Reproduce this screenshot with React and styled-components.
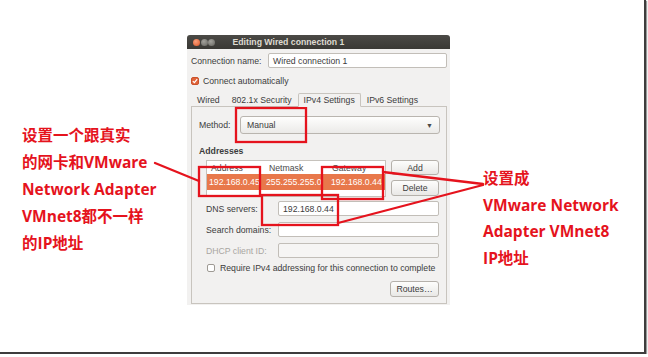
import React from 'react';
import styled, { createGlobalStyle } from 'styled-components';

const RED = '#e5131d';

const GlobalStyle = createGlobalStyle`
  html, body {
    margin: 0;
    padding: 0;
    background: #fff;
  }
  body {
    font-family: "Liberation Sans", Arial, sans-serif;
  }
`;

const Frame = styled.div`
  position: relative;
  width: 644px;
  height: 352px;
  background: #fff;
  border-right: 2px solid #3d3d3d;
  border-bottom: 2px solid #3d3d3d;
  box-shadow: 1px 1px 1px #9a9a9a;
  display: flex;
  align-items: flex-start;
`;

const Note = styled.div`
  color: ${RED};
  font-family: "Open Sans", "Noto Sans CJK SC", sans-serif;
  font-weight: 700;
  font-size: 15.5px;
  white-space: nowrap;
`;

const LeftNote = styled(Note)`
  width: 165px;
  padding: 122px 0 0 22px;
  line-height: 27px;
`;

const RightNote = styled(Note)`
  margin-left: 33px;
  padding-top: 165px;
  line-height: 26.5px;
`;

const Dialog = styled.div`
  margin-top: 35px;
  width: 263px;
  font-size: 8.7px;
  color: #3c3c3c;
`;

const TitleBar = styled.div`
  height: 14px;
  background: linear-gradient(#4b4a46, #3a3935);
  border-radius: 3px 3px 0 0;
  display: flex;
  align-items: center;
  padding-left: 6px;
`;

const WinBtn = styled.span`
  width: 7px;
  height: 7px;
  border-radius: 50%;
  margin-right: 0.5px;
  background: ${p =>
    p.$close
      ? 'radial-gradient(circle at 40% 35%, #f8a07c, #df5527)'
      : 'radial-gradient(circle at 40% 35%, #a3a29c, #64635e)'};
`;

const Title = styled.span`
  margin-left: 17px;
  color: #dfdbd2;
  font-weight: 700;
  font-size: 8.7px;
`;

const Body = styled.div`
  background: #f2f1f0;
  padding: 4px 3px 1px 4px;
  display: flex;
  flex-direction: column;
`;

const Row = styled.div`
  display: flex;
  align-items: center;
  height: ${p => p.$h || 15}px;
`;

const Label = styled.span`
  width: ${p => p.$w}px;
  flex: none;
  color: ${p => (p.$muted ? '#a9a6a1' : '#3c3c3c')};
`;

const TextInput = styled.div`
  flex: 1;
  height: 15px;
  box-sizing: border-box;
  border: 1px solid #c2beb8;
  border-radius: 2px;
  background: ${p => (p.$disabled ? '#f6f5f4' : '#fff')};
  padding-left: ${p => p.$pad || 3}px;
  display: flex;
  align-items: center;
  color: #3c3c3c;
`;

const CheckRow = styled.div`
  display: flex;
  align-items: center;
  gap: ${p => p.$gap}px;
  height: ${p => p.$h}px;
  margin-top: ${p => p.$mt}px;
  padding-left: ${p => p.$pl || 0}px;
`;

const Box = styled.span`
  width: 8px;
  height: 8px;
  box-sizing: border-box;
  border-radius: 2px;
  flex: none;
  display: flex;
  align-items: center;
  justify-content: center;
  background: ${p => (p.$checked ? '#e1643a' : '#fff')};
  border: 1px solid ${p => (p.$checked ? '#c9522b' : '#9e9a94')};
`;

const Tabs = styled.div`
  display: flex;
  align-items: flex-end;
  height: 14px;
  margin-top: 6px;
  position: relative;
  z-index: 1;
`;

const Tab = styled.span`
  padding: 0 5px;
  height: ${p => (p.$active ? 14 : 13)}px;
  line-height: 13px;
  box-sizing: border-box;
  border: 1px solid ${p => (p.$active ? '#c8c4be' : 'transparent')};
  border-bottom-color: ${p => (p.$active ? '#f2f1f0' : 'transparent')};
  border-radius: 2px 2px 0 0;
  background: ${p => (p.$active ? '#f2f1f0' : 'transparent')};
  margin-bottom: ${p => (p.$active ? -1 : 0)}px;
`;

const Panel = styled.div`
  border: 1px solid #c8c4be;
  background: #f2f1f0;
  padding: 9px 6px 6px 7px;
  display: flex;
  flex-direction: column;
`;

const Combo = styled.div`
  flex: 1;
  height: 18px;
  box-sizing: border-box;
  border: 1px solid #b9b5af;
  border-radius: 3px;
  background: linear-gradient(#fefefd, #ebeae8);
  display: flex;
  align-items: center;
  justify-content: space-between;
  padding: 0 6px;
`;

const Arrow = styled.span`
  font-size: 7px;
  color: #4a4a4a;
`;

const Heading = styled.div`
  margin-top: 11px;
  height: 12px;
  line-height: 12px;
  font-weight: 700;
`;

const AddrSection = styled.div`
  margin-top: 3px;
  padding-left: 7px;
  display: flex;
  gap: 5px;
`;

const Table = styled.div`
  width: 180px;
  height: 37px;
  box-sizing: border-box;
  border: 1px solid #c6c2bc;
  background: #fff;
`;

const TRow = styled.div`
  display: grid;
  grid-template-columns: 57px 62px 1fr;
  height: ${p => p.$h}px;
  align-items: center;
  background: ${p => (p.$selected ? '#e8784b' : '#fff')};
  color: ${p => (p.$selected ? '#fff' : '#4a4a4a')};
`;

const Cell = styled.span`
  padding-left: ${p => p.$pl}px;
  white-space: nowrap;
  overflow: hidden;
`;

const BtnColumn = styled.div`
  display: flex;
  flex-direction: column;
  gap: 5px;
`;

const Button = styled.div`
  width: ${p => p.$w}px;
  height: ${p => p.$h}px;
  box-sizing: border-box;
  border: 1px solid #b5b1ab;
  border-radius: 3px;
  background: linear-gradient(#fdfdfc, #e9e8e6);
  display: flex;
  align-items: center;
  justify-content: center;
  color: #3c3c3c;
`;

const Form = styled.div`
  margin-top: 4px;
  padding-left: 7px;
  margin-right: 1px;
  display: flex;
  flex-direction: column;
  gap: 6px;
`;

const Footer = styled.div`
  margin-top: 8px;
  margin-right: 1px;
  display: flex;
  justify-content: flex-end;
`;

const Overlay = styled.svg`
  position: absolute;
  left: 0;
  top: 0;
  pointer-events: none;
`;

const Check = () => (
  <svg width="6" height="6" viewBox="0 0 6 6">
    <path d="M0.8 3.1 L2.4 4.6 L5.2 1.2" fill="none" stroke="#fff" strokeWidth="1.2" />
  </svg>
);

export default function App() {
  return (
    <>
      <GlobalStyle />
      <Frame>
        <LeftNote>
          <div>设置一个跟真实</div>
          <div>的网卡和VMware</div>
          <div>Network Adapter</div>
          <div>VMnet8都不一样</div>
          <div>的IP地址</div>
        </LeftNote>

        <Dialog>
          <TitleBar>
            <WinBtn $close />
            <WinBtn />
            <WinBtn />
            <Title>Editing Wired connection 1</Title>
          </TitleBar>
          <Body>
            <Row>
              <Label $w={77}>Connection name:</Label>
              <TextInput $pad={4}>Wired connection 1</TextInput>
            </Row>
            <CheckRow $gap={4} $h={11} $mt={7}>
              <Box $checked>
                <Check />
              </Box>
              <span>Connect automatically</span>
            </CheckRow>
            <Tabs>
              <Tab>Wired</Tab>
              <Tab>802.1x Security</Tab>
              <Tab $active>IPv4 Settings</Tab>
              <Tab>IPv6 Settings</Tab>
            </Tabs>
            <Panel>
              <Row $h={18}>
                <Label $w={41}>Method:</Label>
                <Combo>
                  <span>Manual</span>
                  <Arrow>▼</Arrow>
                </Combo>
              </Row>
              <Heading>Addresses</Heading>
              <AddrSection>
                <Table>
                  <TRow $h={13}>
                    <Cell $pl={4}>Address</Cell>
                    <Cell $pl={5}>Netmask</Cell>
                    <Cell $pl={6}>Gateway</Cell>
                  </TRow>
                  <TRow $h={16} $selected>
                    <Cell $pl={2}>192.168.0.45</Cell>
                    <Cell $pl={2}>255.255.255.0</Cell>
                    <Cell $pl={5}>192.168.0.44</Cell>
                  </TRow>
                </Table>
                <BtnColumn>
                  <Button $w={48} $h={15}>Add</Button>
                  <Button $w={48} $h={16}>Delete</Button>
                </BtnColumn>
              </AddrSection>
              <Form>
                <Row>
                  <Label $w={72}>DNS servers:</Label>
                  <TextInput $pad={4}>192.168.0.44</TextInput>
                </Row>
                <Row>
                  <Label $w={72}>Search domains:</Label>
                  <TextInput />
                </Row>
                <Row>
                  <Label $w={72} $muted>DHCP client ID:</Label>
                  <TextInput $disabled />
                </Row>
              </Form>
              <CheckRow $gap={5} $h={10} $mt={5} $pl={8}>
                <Box />
                <span>Require IPv4 addressing for this connection to complete</span>
              </CheckRow>
              <Footer>
                <Button $w={49} $h={16}>Routes…</Button>
              </Footer>
            </Panel>
          </Body>
        </Dialog>

        <RightNote>
          <div>设置成</div>
          <div>VMware Network</div>
          <div>Adapter VMnet8</div>
          <div>IP地址</div>
        </RightNote>

        <Overlay width="648" height="357" viewBox="0 0 648 357">
          <g fill="none" stroke={RED} strokeWidth="2.3">
            <rect x="236" y="108" width="70" height="34" />
            <rect x="199" y="167" width="61" height="29" />
            <rect x="322" y="167" width="61" height="32" />
            <rect x="262" y="195" width="76" height="30" />
          </g>
          <g stroke={RED} strokeWidth="2.3" strokeLinecap="round">
            <line x1="155" y1="163" x2="199" y2="181" />
            <line x1="383" y1="172" x2="483" y2="184" />
            <line x1="338" y1="223" x2="483" y2="185" />
          </g>
        </Overlay>
      </Frame>
    </>
  );
}
